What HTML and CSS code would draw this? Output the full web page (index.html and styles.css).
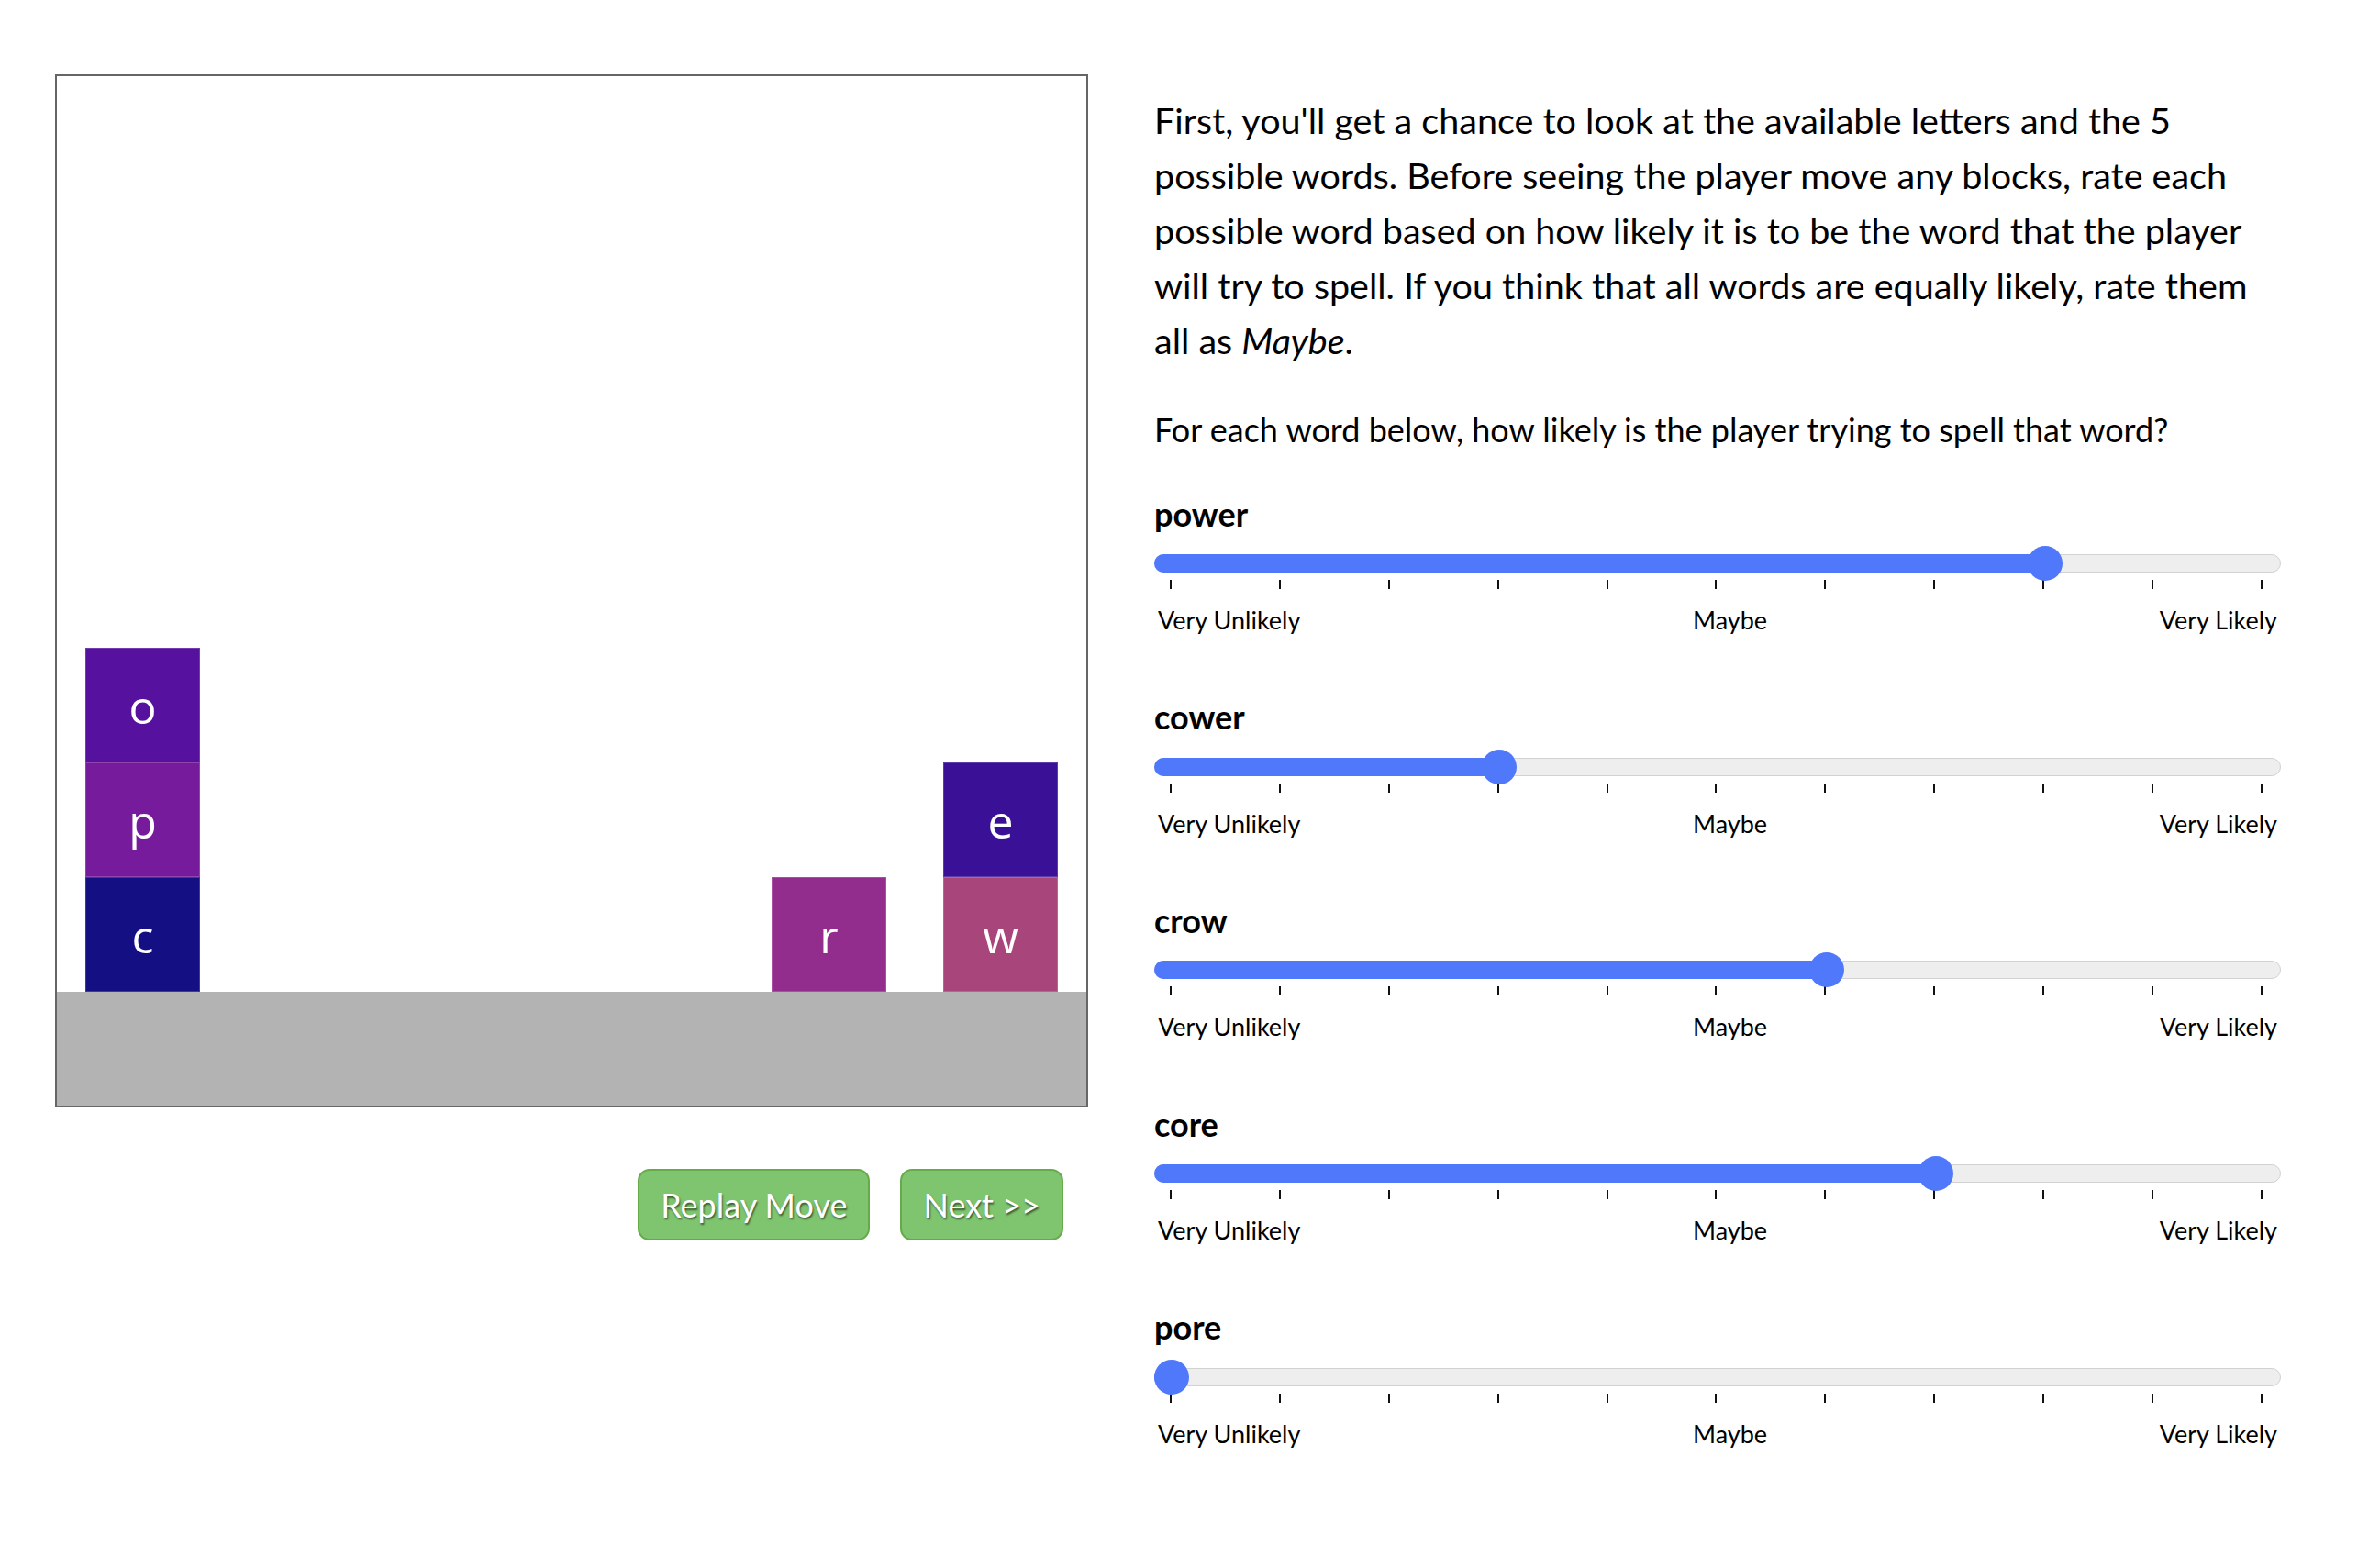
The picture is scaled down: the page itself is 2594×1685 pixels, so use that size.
FILE: index.html
```html
<!DOCTYPE html>
<html lang="en">
<head>
<meta charset="utf-8">
<title>Word rating</title>
<link rel="stylesheet" href="styles.css">
</head>
<body>
<main class="page">
  <section class="left">
    <div class="stage">
      <div class="sky">
        <div class="block col-1 h-3 c-o">o</div>
        <div class="block col-1 h-2 c-p">p</div>
        <div class="block col-1 h-1 c-c">c</div>
        <div class="block col-2 h-1 c-r">r</div>
        <div class="block col-3 h-2 c-e">e</div>
        <div class="block col-3 h-1 c-w">w</div>
      </div>
      <div class="ground"></div>
    </div>
    <div class="actions">
      <button class="btn">Replay Move</button>
      <button class="btn">Next &gt;&gt;</button>
    </div>
  </section>
  <section class="right">
    <p class="intro">First, you'll get a chance to look at the available letters and the 5 possible words. Before seeing the player move any blocks, rate each possible word based on how likely it is to be the word that the player will try to spell. If you think that all words are equally likely, rate them all as <em>Maybe</em>.</p>
    <p class="intro question">For each word below, how likely is the player trying to spell that word?</p>
    <div class="ratings">
      <div class="rating">
        <div class="word">power</div>
        <div class="track"><div class="fill" style="width:971px"></div><div class="thumb" style="left:951px"></div></div>
        <div class="ticks"><span></span><span></span><span></span><span></span><span></span><span></span><span></span><span></span><span></span><span></span><span></span></div>
        <div class="scale"><span>Very Unlikely</span><span>Maybe</span><span>Very Likely</span></div>
      </div>
      <div class="rating">
        <div class="word">cower</div>
        <div class="track"><div class="fill" style="width:376px"></div><div class="thumb" style="left:356px"></div></div>
        <div class="ticks"><span></span><span></span><span></span><span></span><span></span><span></span><span></span><span></span><span></span><span></span><span></span></div>
        <div class="scale"><span>Very Unlikely</span><span>Maybe</span><span>Very Likely</span></div>
      </div>
      <div class="rating">
        <div class="word">crow</div>
        <div class="track"><div class="fill" style="width:733px"></div><div class="thumb" style="left:713px"></div></div>
        <div class="ticks"><span></span><span></span><span></span><span></span><span></span><span></span><span></span><span></span><span></span><span></span><span></span></div>
        <div class="scale"><span>Very Unlikely</span><span>Maybe</span><span>Very Likely</span></div>
      </div>
      <div class="rating">
        <div class="word">core</div>
        <div class="track"><div class="fill" style="width:852px"></div><div class="thumb" style="left:832px"></div></div>
        <div class="ticks"><span></span><span></span><span></span><span></span><span></span><span></span><span></span><span></span><span></span><span></span><span></span></div>
        <div class="scale"><span>Very Unlikely</span><span>Maybe</span><span>Very Likely</span></div>
      </div>
      <div class="rating">
        <div class="word">pore</div>
        <div class="track"><div class="fill" style="width:19px"></div><div class="thumb" style="left:-1px"></div></div>
        <div class="ticks"><span></span><span></span><span></span><span></span><span></span><span></span><span></span><span></span><span></span><span></span><span></span></div>
        <div class="scale"><span>Very Unlikely</span><span>Maybe</span><span>Very Likely</span></div>
      </div>
    </div>
  </section>
</main>
</body>
</html>
```

FILE: styles.css
```css
html, body {
  margin: 0;
  padding: 0;
  background: #ffffff;
}

body {
  font-family: "Lato", "Open Sans", sans-serif;
  color: #000;
}

.page {
  display: flex;
  align-items: flex-start;
  gap: 72px;
  padding: 81px 0 0 60px;
}

.left {
  display: flex;
  flex-direction: column;
  width: 1126px;
}

.stage {
  width: 1122px;
  height: 1122px;
  border: 2px solid #666666;
  display: flex;
  flex-direction: column;
}

.sky {
  position: relative;
  flex: 1;
  background: #fff;
}

.ground {
  height: 124px;
  background: #b3b3b3;
}

.block {
  position: absolute;
  width: 125px;
  height: 125px;
  box-sizing: border-box;
  border: 1px solid rgba(255, 255, 255, 0.18);
  display: flex;
  align-items: center;
  justify-content: center;
  color: #fff;
  font-family: "Open Sans", "DejaVu Sans", sans-serif;
  font-size: 50px;
  padding-top: 2px;
}

.col-1 { left: 31px; }
.col-2 { left: 779px; }
.col-3 { left: 966px; }
.h-1 { bottom: 0; }
.h-2 { bottom: 125px; }
.h-3 { bottom: 250px; }

.c-o { background: #56119e; }
.c-p { background: #771b9d; }
.c-c { background: #140f82; }
.c-r { background: #922d8e; }
.c-e { background: #3a1196; }
.c-w { background: #a8457a; }

.actions {
  display: flex;
  justify-content: flex-end;
  gap: 33px;
  margin-top: 67px;
  padding-right: 27px;
}

.btn {
  height: 78px;
  padding: 0 23px;
  border: 2px solid #66ab48;
  border-radius: 13px;
  background: #7fc46f;
  color: #fff;
  font-family: "Lato", sans-serif;
  font-size: 36px;
  text-shadow: 1px 2px 2px rgba(0, 0, 0, 0.55);
  cursor: pointer;
}

.right {
  width: 1228px;
  padding-top: 20px;
}

.intro {
  margin: 0 0 37px;
  font-size: 39.5px;
  line-height: 60px;
}

.question {
  font-size: 36px;
}

.ratings {
  display: flex;
  flex-direction: column;
  gap: 70.2px;
  margin-top: 41.5px;
}

.rating {
  display: flex;
  flex-direction: column;
}

.word {
  font-size: 36px;
  font-weight: 700;
  line-height: 40px;
}

.track {
  position: relative;
  margin-top: 24.5px;
  height: 20px;
  box-sizing: border-box;
  border: 1px solid #d2d2d2;
  border-radius: 10px;
  background: #eeeeee;
}

.fill {
  position: absolute;
  left: -1px;
  top: -1px;
  height: 20px;
  border-radius: 10px;
  background: #4f79fa;
}

.thumb {
  position: absolute;
  top: -10px;
  width: 38px;
  height: 38px;
  border-radius: 50%;
  background: #4f79fa;
}

.ticks {
  display: flex;
  justify-content: space-between;
  margin-top: 8px;
  padding: 0 20px 0 17px;
  height: 10px;
}

.ticks span {
  width: 2px;
  height: 10px;
  background: #111;
}

.scale {
  display: flex;
  justify-content: space-between;
  margin-top: 19px;
  padding: 0 4px;
  font-size: 27px;
  line-height: 30px;
}
```
